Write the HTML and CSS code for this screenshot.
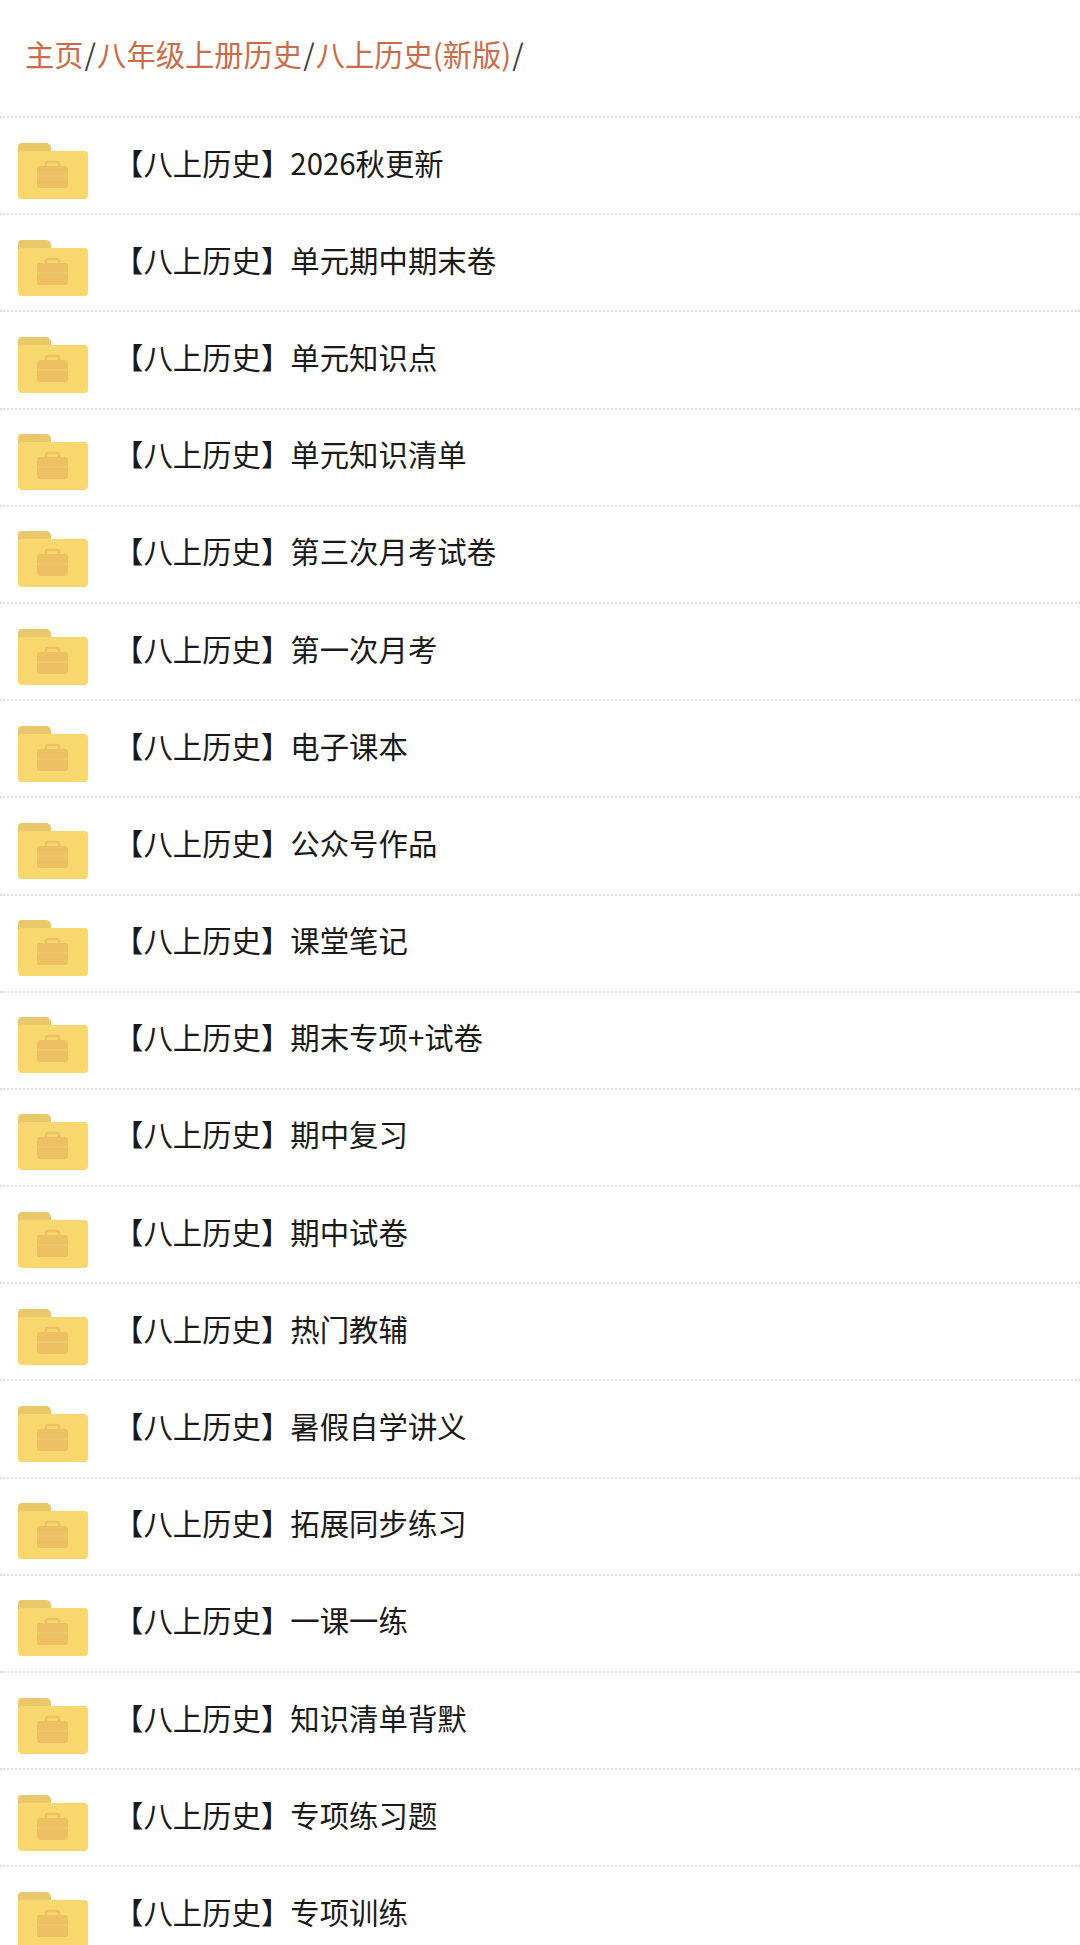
FILE: index.html
```html
<!DOCTYPE html>
<html>
<head>
  <meta charset="utf-8">
  <title>八上历史(新版)</title>
  <link rel="stylesheet" href="styles.css">
</head>
<body>

<svg class="defs" width="0" height="0">
  <symbol id="folder" viewBox="0 0 70 56">
    <path d="M0 4a4 4 0 0 1 4-4h24a5 5 0 0 1 5 5v5H0z" fill="#e9c86c"/>
    <path d="M0 12a4 4 0 0 1 4-4h62a4 4 0 0 1 4 4v40a4 4 0 0 1-4 4H4a4 4 0 0 1-4-4z" fill="#f8d76e"/>
    <path d="M28 24v-3a2 2 0 0 1 2-2h9a2 2 0 0 1 2 2v3" fill="none" stroke="#ecc063" stroke-width="2.5"/>
    <path d="M19 26a3 3 0 0 1 3-3h25a3 3 0 0 1 3 3v16a3 3 0 0 1-3 3H22a3 3 0 0 1-3-3z" fill="#ecc063"/>
    <path d="M19 33h31" stroke="#f0cb6c" stroke-width="1"/>
  </symbol>
</svg>

<div class="crumbs">
  <a>主页</a>/<a>八年级上册历史</a>/<a>八上历史(新版)</a>/
</div>

<ul class="list">
  <li><svg class="folder"><use href="#folder"/></svg><span>【八上历史】2026秋更新</span></li>
  <li><svg class="folder"><use href="#folder"/></svg><span>【八上历史】单元期中期末卷</span></li>
  <li><svg class="folder"><use href="#folder"/></svg><span>【八上历史】单元知识点</span></li>
  <li><svg class="folder"><use href="#folder"/></svg><span>【八上历史】单元知识清单</span></li>
  <li><svg class="folder"><use href="#folder"/></svg><span>【八上历史】第三次月考试卷</span></li>
  <li><svg class="folder"><use href="#folder"/></svg><span>【八上历史】第一次月考</span></li>
  <li><svg class="folder"><use href="#folder"/></svg><span>【八上历史】电子课本</span></li>
  <li><svg class="folder"><use href="#folder"/></svg><span>【八上历史】公众号作品</span></li>
  <li><svg class="folder"><use href="#folder"/></svg><span>【八上历史】课堂笔记</span></li>
  <li><svg class="folder"><use href="#folder"/></svg><span>【八上历史】期末专项+试卷</span></li>
  <li><svg class="folder"><use href="#folder"/></svg><span>【八上历史】期中复习</span></li>
  <li><svg class="folder"><use href="#folder"/></svg><span>【八上历史】期中试卷</span></li>
  <li><svg class="folder"><use href="#folder"/></svg><span>【八上历史】热门教辅</span></li>
  <li><svg class="folder"><use href="#folder"/></svg><span>【八上历史】暑假自学讲义</span></li>
  <li><svg class="folder"><use href="#folder"/></svg><span>【八上历史】拓展同步练习</span></li>
  <li><svg class="folder"><use href="#folder"/></svg><span>【八上历史】一课一练</span></li>
  <li><svg class="folder"><use href="#folder"/></svg><span>【八上历史】知识清单背默</span></li>
  <li><svg class="folder"><use href="#folder"/></svg><span>【八上历史】专项练习题</span></li>
  <li><svg class="folder"><use href="#folder"/></svg><span>【八上历史】专项训练</span></li>
</ul>

</body>
</html>
```

FILE: styles.css
```css
html, body {
  height: 1945px;
  overflow: hidden;
}
body {
  margin: 0;
  background: #fff;
  color: #222;
  font-family: "Noto Sans CJK SC", "Noto Sans", sans-serif;
  font-size: 29.4px;
}
.defs {
  position: absolute;
}
.crumbs {
  height: 116px;
  padding: 32px 0 0 24px;
  box-sizing: border-box;
  font-size: 29.3px;
  line-height: 42px;
  color: #3a4044;
}
.crumbs a {
  color: #cb6b48;
  margin: 0 1px;
}
.list {
  list-style: none;
  margin: 0;
  padding: 0;
  border-top: 2px dotted #e0e0e0;
}
.list li {
  display: flex;
  align-items: center;
  height: 97.2px;
  box-sizing: border-box;
  padding-left: 18px;
  border-bottom: 2px dotted #e0e0e0;
}
.folder {
  width: 70px;
  height: 56px;
  flex: none;
  margin: 10px 26px 0 0;
}
.list span {
  color: #1a1a1a;
  line-height: 42px;
  margin-bottom: 8px;
  white-space: nowrap;
}
```
